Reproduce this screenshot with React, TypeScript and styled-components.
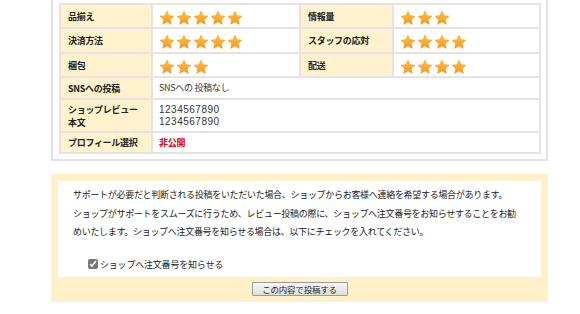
import React from "react";
import styled, { createGlobalStyle } from "styled-components";

const GlobalStyle = createGlobalStyle`
  html, body {
    margin: 0;
    padding: 0;
    background: #fff;
  }
  body {
    font-family: "Noto Sans CJK JP", "Liberation Sans", sans-serif;
    color: #333;
  }
`;

const Page = styled.div`
  width: 580px;
  height: 314px;
  overflow: hidden;
  padding-left: 51px;
  box-sizing: border-box;
`;

const ReviewPanel = styled.div`
  width: 497px;
  box-sizing: border-box;
  border: 2px solid #e2e2e2;
  border-top: none;
  padding: 3px 6px 5px 6px;
`;

const Table = styled.table`
  width: 482px;
  border-collapse: collapse;
  border: 2px solid #e4e4e4;
  table-layout: fixed;
`;

const Row = styled.tr<{ h: number }>`
  height: ${({ h }) => h}px;
`;

const Label = styled.th`
  background: #fff2cc;
  border: 2px solid #e4e4e4;
  text-align: left;
  vertical-align: middle;
  font-weight: 600;
  font-size: 9px;
  letter-spacing: -0.3px;
  line-height: 13px;
  color: #222;
  padding: 0 0 0 7px;
  box-sizing: border-box;
`;

const Value = styled.td<{ red?: boolean }>`
  background: #fff;
  border: 2px solid #e4e4e4;
  vertical-align: middle;
  padding: 0 0 0 6px;
  font-size: 9px;
  letter-spacing: -0.3px;
  line-height: 12px;
  color: ${({ red }) => (red ? "#e60012" : "#333")};
  font-weight: ${({ red }) => (red ? 700 : 400)};
`;

const Digits = styled.span`
  font-family: "Liberation Sans", "Noto Sans CJK JP", sans-serif;
  font-size: 10px;
  letter-spacing: 0.5px;
  line-height: 12px;
`;

const Stars = styled.div`
  display: flex;
  gap: 1px;
  padding-top: 3px;
`;

const Notice = styled.div`
  margin-top: 13px;
  width: 497px;
  box-sizing: border-box;
  background: #fff0c8;
  padding: 7px 7px 6px 7px;
`;

const NoticeBody = styled.div`
  background: #fff;
  height: 96px;
  box-sizing: border-box;
  padding: 5px 0 0 15px;
`;

const Paragraph = styled.p`
  margin: 0;
  font-size: 9px;
  letter-spacing: -0.3px;
  line-height: 18.5px;
  white-space: nowrap;
  color: #222;
`;

const CheckRow = styled.label`
  display: flex;
  align-items: center;
  gap: 2px;
  margin: 16px 0 0 15px;
  font-size: 9px;
  letter-spacing: -0.2px;
  color: #222;
`;

const CheckBox = styled.input`
  width: 10px;
  height: 10px;
  margin: 0;
  accent-color: #777;
`;

const Actions = styled.div`
  display: flex;
  justify-content: center;
  padding-top: 5px;
`;

const SubmitButton = styled.button`
  width: 96px;
  height: 14px;
  padding: 0;
  border: 1px solid #9a9a9a;
  border-radius: 1px;
  background: linear-gradient(#f6f6f6, #dedede);
  font-family: "Noto Sans CJK JP", sans-serif;
  font-size: 8.5px;
  letter-spacing: -0.2px;
  line-height: 12px;
  color: #222;
`;

const Star: React.FC = () => (
  <svg width="16" height="16" viewBox="0 0 24 24">
    <defs>
      <linearGradient id="starFill" x1="0" y1="0" x2="0" y2="1">
        <stop offset="0" stopColor="#ffc445" />
        <stop offset="1" stopColor="#f5951a" />
      </linearGradient>
    </defs>
    <path
      d="M12 1.5l3.2 6.9 7.4.8-5.5 5.1 1.5 7.4L12 17.9l-6.6 3.8 1.5-7.4L1.4 9.2l7.4-.8z"
      fill="url(#starFill)"
      stroke="#f0a030"
      strokeWidth="0.8"
      strokeLinejoin="round"
    />
  </svg>
);

const Rating: React.FC<{ count: number }> = ({ count }) => (
  <Stars>
    {Array.from({ length: count }).map((_, i) => (
      <Star key={i} />
    ))}
  </Stars>
);

const ratings = [
  ["品揃え", 5, "情報量", 3],
  ["決済方法", 5, "スタッフの応対", 4],
  ["梱包", 3, "配送", 4],
] as const;

const ratingHeights = [24, 25, 24];

export default function App() {
  return (
    <Page>
      <GlobalStyle />
      <ReviewPanel>
        <Table>
          <colgroup>
            <col style={{ width: 92 }} />
            <col style={{ width: 148 }} />
            <col style={{ width: 93 }} />
            <col />
          </colgroup>
          <tbody>
            {ratings.map(([l1, n1, l2, n2], i) => (
              <Row h={ratingHeights[i]} key={l1}>
                <Label>{l1}</Label>
                <Value>
                  <Rating count={n1} />
                </Value>
                <Label>{l2}</Label>
                <Value>
                  <Rating count={n2} />
                </Value>
              </Row>
            ))}
            <Row h={22}>
              <Label>SNSへの投稿</Label>
              <Value colSpan={3}>SNSへの 投稿なし</Value>
            </Row>
            <Row h={33}>
              <Label>
                ショップレビュー
                <br />
                本文
              </Label>
              <Value colSpan={3}>
                <Digits>
                  1234567890
                  <br />
                  1234567890
                </Digits>
              </Value>
            </Row>
            <Row h={21}>
              <Label>プロフィール選択</Label>
              <Value colSpan={3} red>
                非公開
              </Value>
            </Row>
          </tbody>
        </Table>
      </ReviewPanel>

      <Notice>
        <NoticeBody>
          <Paragraph>
            サポートが必要だと判断される投稿をいただいた場合、ショップからお客様へ連絡を希望する場合があります。
            <br />
            ショップがサポートをスムーズに行うため、レビュー投稿の際に、ショップへ注文番号をお知らせすることをお勧
            <br />
            めいたします。ショップへ注文番号を知らせる場合は、以下にチェックを入れてください。
          </Paragraph>
          <CheckRow>
            <CheckBox type="checkbox" defaultChecked />
            ショップへ注文番号を知らせる
          </CheckRow>
        </NoticeBody>
        <Actions>
          <SubmitButton type="button">この内容で投稿する</SubmitButton>
        </Actions>
      </Notice>
    </Page>
  );
}
